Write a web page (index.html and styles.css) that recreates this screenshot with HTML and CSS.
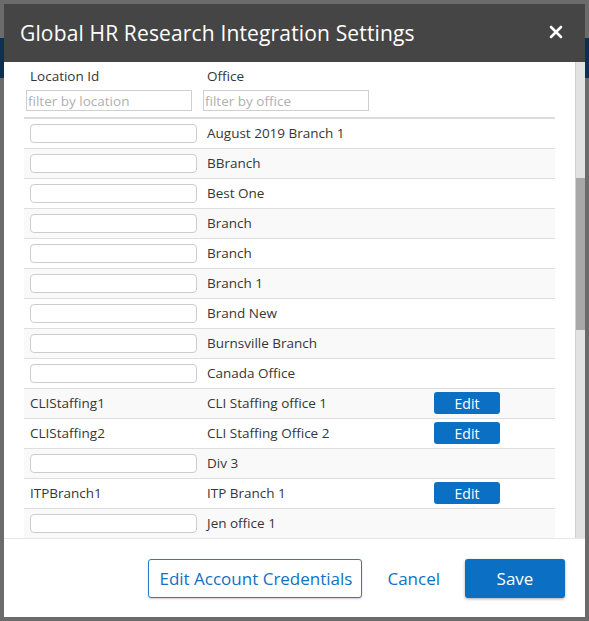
FILE: index.html
```html
<!DOCTYPE html>
<html lang="en">
<head>
    <meta charset="UTF-8">
    <meta name="viewport" content="width=device-width, initial-scale=1.0">
    <title>Global HR Research Integration Settings</title>
    <link rel="stylesheet" href="styles.css">
</head>
<body>
    <div class="modal">
        <div class="modal-header">
            <h2 class="modal-title">Global HR Research Integration Settings</h2>
            <button class="close" type="button">
                <svg width="14" height="14" viewBox="0 0 14 14">
                    <path d="M2 2 L12 12 M12 2 L2 12" stroke="#fff" stroke-width="2.6" stroke-linecap="round"/>
                </svg>
            </button>
        </div>

        <div class="modal-body">
            <div class="content">
                <table class="locations">
                    <thead>
                        <tr>
                            <th class="col-id">
                                <div class="label">Location Id</div>
                                <input class="filter" type="text" placeholder="filter by location">
                            </th>
                            <th class="col-office">
                                <div class="label">Office</div>
                                <input class="filter" type="text" placeholder="filter by office">
                            </th>
                            <th class="col-action"></th>
                        </tr>
                    </thead>
                    <tbody>
                        <tr><td><input class="loc" type="text"></td><td>August 2019 Branch 1</td><td></td></tr>
                        <tr><td><input class="loc" type="text"></td><td>BBranch</td><td></td></tr>
                        <tr><td><input class="loc" type="text"></td><td>Best One</td><td></td></tr>
                        <tr><td><input class="loc" type="text"></td><td>Branch</td><td></td></tr>
                        <tr><td><input class="loc" type="text"></td><td>Branch</td><td></td></tr>
                        <tr><td><input class="loc" type="text"></td><td>Branch 1</td><td></td></tr>
                        <tr><td><input class="loc" type="text"></td><td>Brand New</td><td></td></tr>
                        <tr><td><input class="loc" type="text"></td><td>Burnsville Branch</td><td></td></tr>
                        <tr><td><input class="loc" type="text"></td><td>Canada Office</td><td></td></tr>
                        <tr><td>CLIStaffing1</td><td>CLI Staffing office 1</td><td><button class="edit">Edit</button></td></tr>
                        <tr><td>CLIStaffing2</td><td>CLI Staffing Office 2</td><td><button class="edit">Edit</button></td></tr>
                        <tr><td><input class="loc" type="text"></td><td>Div 3</td><td></td></tr>
                        <tr><td>ITPBranch1</td><td>ITP Branch 1</td><td><button class="edit">Edit</button></td></tr>
                        <tr><td><input class="loc" type="text"></td><td>Jen office 1</td><td></td></tr>
                    </tbody>
                </table>
            </div>
            <div class="scrollbar">
                <div class="thumb"></div>
            </div>
        </div>

        <div class="modal-footer">
            <button class="btn btn-outline">Edit Account Credentials</button>
            <button class="btn btn-link">Cancel</button>
            <button class="btn btn-primary">Save</button>
        </div>
    </div>
</body>
</html>
```

FILE: styles.css
```css
* {
    box-sizing: border-box;
}

body {
    margin: 0;
    width: 589px;
    height: 621px;
    overflow: hidden;
    background: linear-gradient(to bottom, #6b6b6b 0, #6b6b6b 38px, #0f2f52 38px, #0f2f52 78px, #6b6b6b 78px);
    font-family: "Open Sans", "Liberation Sans", sans-serif;
    color: #363636;
}

.modal {
    margin: 4px 4px 4px 4px;
    width: 581px;
    height: 613px;
    background: #fff;
    display: flex;
    flex-direction: column;
}

.modal-header {
    height: 58px;
    flex: none;
    background: #454545;
    display: flex;
    align-items: center;
    justify-content: space-between;
    padding: 0 22px 0 16px;
}

.modal-title {
    margin: 0;
    color: #fff;
    font-size: 21px;
    font-weight: 500;
    letter-spacing: 0.15px;
}

.close {
    background: none;
    border: 0;
    padding: 0;
    display: flex;
    margin-top: -2px;
}

.modal-body {
    height: 476px;
    flex: none;
    display: flex;
}

.content {
    flex: 1;
    overflow: hidden;
    padding: 0 20px;
}

.scrollbar {
    width: 10px;
    flex: none;
    background: #e2e2e2;
    border-left: 1px solid #d0d0d0;
}

.thumb {
    margin-top: 116px;
    height: 152px;
    background: #a8a8a8;
}

.locations {
    width: 100%;
    table-layout: fixed;
    border-collapse: collapse;
    font-size: 13.5px;
}

.locations th {
    text-align: left;
    font-weight: 400;
    padding: 5px 2px 6px;
    border-bottom: 2px solid #dcdcdc;
    vertical-align: top;
}

.locations .col-id {
    width: 177px;
}

.locations .col-office {
    width: 227px;
}

.label {
    padding-left: 4px;
    height: 18px;
    line-height: 18px;
    margin-bottom: 5px;
}

.filter {
    display: block;
    width: 166px;
    height: 21px;
    border: 1px solid #cfcfcf;
    padding: 0 1px;
    font: inherit;
    font-size: 13.5px;
    color: #333;
}

.filter::placeholder {
    color: #b0b0b0;
}

.locations td {
    height: 30px;
    padding: 0 6px;
    border-bottom: 1px solid #dedede;
    white-space: nowrap;
}

.locations tbody tr:nth-child(even) td {
    background: #f9f9f9;
}

.loc {
    display: block;
    width: 167px;
    height: 19px;
    border: 1px solid #cdcdcd;
    border-radius: 4px;
    background: #fff;
}

.edit {
    display: block;
    width: 66px;
    height: 22px;
    border: 0;
    border-radius: 3px;
    background: #0b6fc4;
    color: #fff;
    font: inherit;
    font-size: 14px;
    padding: 0;
}

.modal-footer {
    flex: 1;
    border-top: 1px solid #e6e6e6;
    display: flex;
    justify-content: flex-end;
    align-items: center;
    padding: 0 20px 0 0;
}

.btn {
    font-family: inherit;
    font-size: 17px;
    height: 39px;
    border-radius: 3px;
    cursor: pointer;
}

.btn-outline {
    background: #fff;
    color: #1370c2;
    border: 1px solid #2a7cc7;
    padding: 0 9px 0 10px;
    box-shadow: 0 1px 2px rgba(0, 0, 0, 0.2);
}

.btn-link {
    background: none;
    border: 0;
    color: #1370c2;
    margin: 0 14px;
    padding: 0 11px;
}

.btn-primary {
    width: 100px;
    background: #0b6fc4;
    color: #fff;
    border: 0;
    box-shadow: 0 1px 3px rgba(0, 0, 0, 0.35);
}
```
